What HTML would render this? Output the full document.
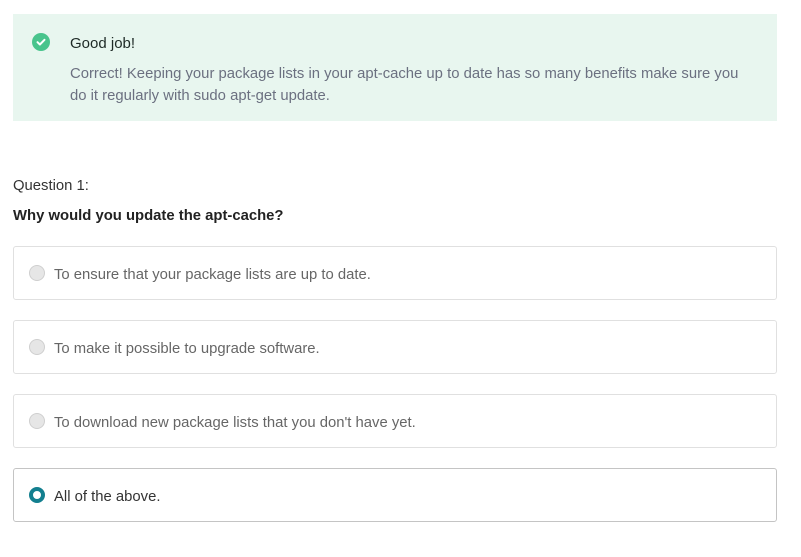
<!DOCTYPE html>
<html><head><style>
body{margin:0;background:#fff;font-family:"Liberation Sans",sans-serif;width:801px;height:557px;position:relative;overflow:hidden}
.ban{position:absolute;left:13px;top:14px;width:764px;height:107px;background:#e8f6ef}
.ic{position:absolute;left:32px;top:33px;width:18px;height:18px;border-radius:50%;background:#48c48c}
.t{position:absolute;font-size:14.85px;white-space:nowrap}
.opt{position:absolute;left:13px;width:762px;height:52px;border:1px solid #e0e0e0;border-radius:3px;box-sizing:content-box}
.opt .r{position:absolute;left:15px;top:18px;width:16px;height:16px;border-radius:50%;background:#e6e6e6;border:1px solid #cfcfcf;box-sizing:border-box}
.opt .l{position:absolute;left:40px;top:20px;font-size:14.85px;color:#666}
</style></head><body>
<div class="ban"></div>
<div class="ic"><svg width="18" height="18" viewBox="0 0 18 18"><path d="M5.5 9.2l2.4 2.3 4.6-4.7" stroke="#fff" stroke-width="2" fill="none" stroke-linecap="round" stroke-linejoin="round"/></svg></div>
<div class="t" style="left:70px;top:35px;color:#1e2a26;font-size:15px">Good job!</div>
<div class="t" style="left:70px;top:66px;color:#6b7080">Correct! Keeping your package lists in your apt-cache up to date has so many benefits make sure you</div>
<div class="t" style="left:70px;top:88px;color:#6b7080">do it regularly with sudo apt-get update.</div>
<div class="t" style="left:13px;top:178px;color:#333">Question 1:</div>
<div class="t" style="left:13px;top:208px;color:#222;font-weight:bold">Why would you update the apt-cache?</div>
<div class="opt" style="top:246px"><div class="r"></div><div class="l">To ensure that your package lists are up to date.</div></div>
<div class="opt" style="top:320px"><div class="r"></div><div class="l">To make it possible to upgrade software.</div></div>
<div class="opt" style="top:394px"><div class="r"></div><div class="l">To download new package lists that you don't have yet.</div></div>
<div class="opt" style="top:468px;border-color:#c4c4c4"><div class="r" style="background:#fff;border:4px solid #137f8f"></div><div class="l" style="color:#333">All of the above.</div></div>
</body></html>
